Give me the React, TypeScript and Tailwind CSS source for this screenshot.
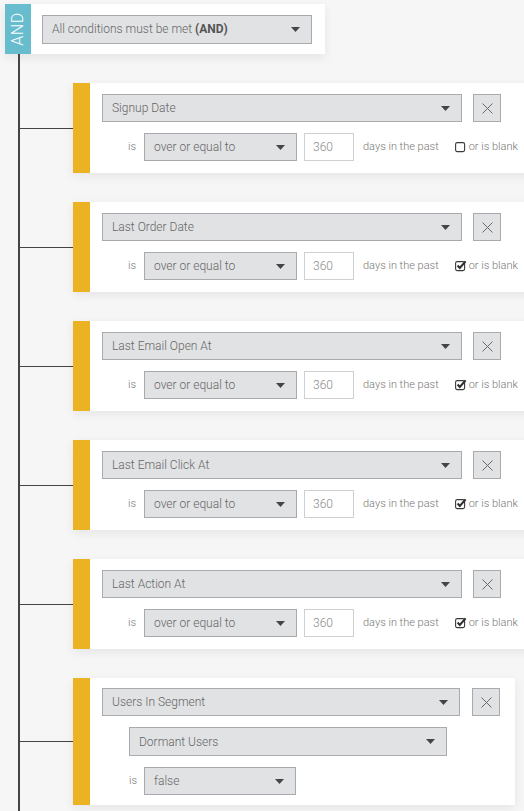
import React from "react";

const Caret = () => (
  <svg width="9" height="5" viewBox="0 0 9 5" className="shrink-0">
    <path d="M0 0h9L4.5 5z" fill="#454545" />
  </svg>
);

function Select({
  label,
  className,
  children,
}: {
  label?: string;
  className: string;
  children?: React.ReactNode;
}) {
  return (
    <div
      className={`flex items-center justify-between bg-[#e1e2e4] border border-[#a9aaae] pl-[9px] pr-[11px] text-[12px] font-light text-[#666] ${className}`}
    >
      <span className="whitespace-nowrap">{children ?? label}</span>
      <Caret />
    </div>
  );
}

const XBtn = () => (
  <div className="w-[28px] h-[28px] shrink-0 flex items-center justify-center bg-[#e1e2e4] border border-[#a9aaae]">
    <svg width="11" height="11" viewBox="0 0 11 11">
      <path d="M0.5 0.5L10.5 10.5M10.5 0.5L0.5 10.5" stroke="#6a6a6a" strokeWidth="1" />
    </svg>
  </div>
);

const Checkbox = ({ checked }: { checked: boolean }) => (
  <svg width="13" height="12" viewBox="0 0 13 12" className="shrink-0">
    <rect x="0.6" y="1.6" width="9" height="9" rx="1.6" fill="none" stroke="#3a3a3a" strokeWidth="1.1" />
    {checked && (
      <path d="M2.6 5.6L4.8 7.9L10.6 1.4" fill="none" stroke="#2f2f2f" strokeWidth="2.1" />
    )}
  </svg>
);

const Row = ({ children }: { children: React.ReactNode }) => (
  <div className="flex items-center">
    <div className="w-[53px] h-px bg-[#444] shrink-0" />
    {children}
  </div>
);

const cardShadow = "shadow-[0_3px_10px_rgba(0,0,0,0.07)]";

function DateCard({ field, checked }: { field: string; checked: boolean }) {
  return (
    <Row>
      <div className={`flex w-[470px] shrink-0 bg-white ${cardShadow}`}>
        <div className="w-[17px] bg-[#ebb323] shrink-0" />
        <div className="flex flex-col gap-[11px] pt-[11px] pb-[12px] pl-[12px]">
          <div className="flex gap-[11px]">
            <Select className="w-[360px] h-[28px]" label={field} />
            <XBtn />
          </div>
          <div className="flex items-center pl-[26px] text-[11px] font-light text-[#777]">
            <span className="w-[16px]">is</span>
            <Select className="w-[153px] h-[28px]" label="over or equal to" />
            <div className="ml-[7px] w-[50px] h-[28px] border border-[#d0d0d0] bg-white flex items-center pl-[8px] text-[12px] text-[#8a8a8a]">
              360
            </div>
            <span className="ml-[9px] whitespace-nowrap">days in the past</span>
            <span className="ml-[16px] flex items-center">
              <Checkbox checked={checked} />
            </span>
            <span className="ml-[1px] whitespace-nowrap">or is blank</span>
          </div>
        </div>
      </div>
    </Row>
  );
}

export default function App() {
  return (
    <div
      className="w-[524px] h-[811px] overflow-hidden bg-[#f6f6f6]"
      style={{ fontFamily: "Roboto, 'Noto Sans', sans-serif" }}
    >
      <div className="pl-[5px] pt-[4px]">
        <div className="flex w-fit shadow-[0_4px_10px_rgba(0,0,0,0.07)]">
          <div className="w-[26px] h-[50px] bg-[#67bccd] flex items-center justify-center">
            <span className="-rotate-90 text-white text-[16px] font-light tracking-[0.5px] leading-none">AND</span>
          </div>
          <div className="w-[294px] h-[50px] bg-white flex items-center pl-[11px]">
            <Select className="w-[270px] h-[29px]">
              All conditions must be met <b className="font-bold text-[#555]">(AND)</b>
            </Select>
          </div>
        </div>
      </div>
      <div className="ml-[18px] border-l-2 border-[#444] pt-[29px] flex flex-col gap-[29px] min-h-[760px]">
        <DateCard field="Signup Date" checked={false} />
        <DateCard field="Last Order Date" checked={true} />
        <DateCard field="Last Email Open At" checked={true} />
        <DateCard field="Last Email Click At" checked={true} />
        <DateCard field="Last Action At" checked={true} />
        <Row>
          <div className={`flex w-[442px] shrink-0 bg-white ${cardShadow}`}>
            <div className="w-[17px] bg-[#ebb323] shrink-0" />
            <div className="flex flex-col gap-[11px] py-[10px] pl-[12px]">
              <div className="flex gap-[12px]">
                <Select className="w-[358px] h-[28px]" label="Users In Segment" />
                <XBtn />
              </div>
              <div className="pl-[27px]">
                <Select className="w-[318px] h-[29px]" label="Dormant Users" />
              </div>
              <div className="flex items-center pl-[27px] text-[11px] font-light text-[#777]">
                <span className="w-[15px]">is</span>
                <Select className="w-[152px] h-[28px]" label="false" />
              </div>
            </div>
          </div>
        </Row>
      </div>
    </div>
  );
}
